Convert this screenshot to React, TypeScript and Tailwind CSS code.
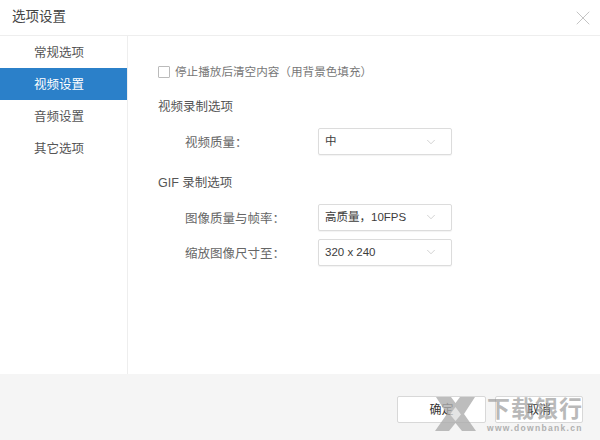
import React from 'react';
import { ChevronDown, X } from 'lucide-react';

const menuItems = ['常规选项', '视频设置', '音频设置', '其它选项'];

const Select = ({ value }: { value: string }) => (
  <div className="flex h-[27px] w-[134px] items-center justify-between rounded-[2px] border border-[#dcdcdc] bg-white pl-[6px] pr-[13px] text-[11.5px] text-[#3c3c3c] shadow-[0_1px_1px_rgba(0,0,0,0.05)]">
    <span>{value}</span>
    <ChevronDown className="h-[14px] w-[14px] text-[#aaa]" strokeWidth={0.9} />
  </div>
);

const Row = ({ label, value }: { label: string; value: string }) => (
  <div className="flex items-center">
    <span className="w-[160px] pl-[27px] pt-[3px] text-[12.5px] text-[#666]">{label}</span>
    <Select value={value} />
  </div>
);

const App: React.FC = () => {
  return (
    <div
      className="relative flex h-[440px] w-[600px] flex-col overflow-hidden bg-white"
      style={{ fontFamily: '"Liberation Sans", "Noto Sans CJK SC", sans-serif' }}
    >
      <div className="flex h-[36px] shrink-0 items-center justify-between border-b border-[#eeeeee] pl-[12px] pr-[5px]">
        <span className="text-[13.5px] text-[#444]">选项设置</span>
        <X className="h-[24px] w-[24px] text-[#aaa]" strokeWidth={0.7} />
      </div>

      <div className="flex flex-1">
        <div className="w-[128px] shrink-0 border-r border-[#eeeeee]">
          {menuItems.map((item, i) => (
            <div
              key={item}
              className={`flex h-[32px] items-center pl-[34px] pt-[2px] text-[12.5px] ${
                i === 1 ? 'bg-[#2b80c9] text-white' : 'text-[#555]'
              }`}
            >
              {item}
            </div>
          ))}
        </div>

        <div className="flex-1 pl-[30px] pt-[27px]">
          <div className="flex items-center gap-[5px]">
            <div className="h-[12px] w-[12px] rounded-[1px] border border-[#bbbbbb]" />
            <span className="text-[11.6px] text-[#777]">停止播放后清空内容（用背景色填充）</span>
          </div>

          <div className="mt-[18px] text-[12.5px] text-[#555]">视频录制选项</div>
          <div className="mt-[11px]">
            <Row label="视频质量：" value="中" />
          </div>

          <div className="mt-[19px] text-[12.5px] text-[#555]">GIF 录制选项</div>
          <div className="mt-[11px] flex flex-col gap-[8px]">
            <Row label="图像质量与帧率：" value="高质量，10FPS" />
            <Row label="缩放图像尺寸至：" value="320 x 240" />
          </div>
        </div>
      </div>

      <div className="flex h-[66px] shrink-0 justify-end gap-[9px] bg-[#f5f5f5] pr-[17px] pt-[22px]">
        <button className="h-[27px] w-[89px] rounded-[2px] border border-[#d8d8d8] bg-white text-[12px] text-[#333]">确定</button>
        <button className="h-[27px] w-[88px] rounded-[2px] border border-[#d8d8d8] bg-white text-[12px] text-[#333]">取消</button>
      </div>

      {/* watermark */}
      <div className="pointer-events-none absolute left-[434px] top-[396px] flex items-start gap-[10px]">
        <svg width="43" height="36" viewBox="0 0 43 36" className="opacity-80">
          <path d="M2 1H17L21.5 7L26 1H41L30 18L42 35H28L21.5 27L15 35H1L13 18Z" fill="#adadad" />
          <path d="M21.5 11L27 18.500L21.500 25L16 18.500Z" fill="#dedede" />
        </svg>
        <div className="flex flex-col">
          <span className="text-[23px] font-bold leading-[27px] tracking-[1px] text-[#9a9a9a]/70">下载银行</span>
          <span className="text-[8.5px] font-bold leading-[10px] tracking-[1.3px] text-[#b0b0b0]">www.downbank.cn</span>
        </div>
      </div>
    </div>
  );
};

export default App;
